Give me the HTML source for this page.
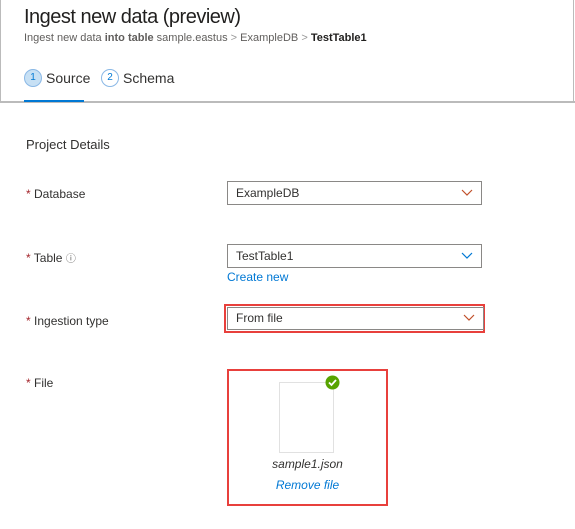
<!DOCTYPE html><html><head><style>
body{margin:0;width:575px;height:529px;background:#fff;font-family:"Liberation Sans",sans-serif;position:relative;overflow:hidden;color:#323130}
.a{position:absolute}
.lbl{font-size:12px;color:#323130}
.lbl b{color:#a4262c;font-weight:normal}
.dd{position:absolute;left:227px;width:245px;height:22px;border:1px solid #8a8886;font-size:12px;line-height:22px;padding-left:8px;box-sizing:content-box}
.dd svg{position:absolute;right:8px;top:7px}
</style></head><body>
<div class="a" style="left:0;top:0;width:1px;height:102px;background:#bbb"></div>
<div class="a" style="left:573px;top:0;width:1px;height:102px;background:#bbb"></div>
<div class="a" style="left:0;top:101px;width:575px;height:2px;background:#bbb"></div>
<div class="a" style="left:24px;top:6px;font-size:20px;color:#201f1e;letter-spacing:-0.5px">Ingest new data (preview)</div>
<div class="a" style="left:24px;top:32px;font-size:11px;color:#605e5c">Ingest new data <b style="font-weight:600">into table</b> sample.eastus <span style="color:#999">&gt;</span> ExampleDB <span style="color:#999">&gt;</span> <span style="color:#201f1e;font-weight:600">TestTable1</span></div>
<div class="a" style="left:24px;top:69px;width:16px;height:16px;border-radius:50%;background:#c7e0f4;border:1px solid #8ab8e6;font-size:10px;text-align:center;line-height:16px;color:#0078d4">1</div>
<div class="a" style="left:46px;top:70px;font-size:14px">Source</div>
<div class="a" style="left:24px;top:100px;width:60px;height:2px;background:#0078d4"></div>
<div class="a" style="left:101px;top:69px;width:16px;height:16px;border-radius:50%;border:1px solid #8ab8e6;font-size:10px;text-align:center;line-height:16px;color:#0078d4">2</div>
<div class="a" style="left:123px;top:70px;font-size:14px">Schema</div>
<div class="a" style="left:26px;top:137px;font-size:13px">Project Details</div>
<div class="a lbl" style="left:26px;top:187px"><b>*</b> Database</div>
<div class="dd" style="top:181px">ExampleDB<svg width="12" height="8"><path d="M1 1l5 5 5-5" fill="none" stroke="#c0502a" stroke-width="1.2"/></svg></div>
<div class="a lbl" style="left:26px;top:250px"><b>*</b> Table <span style="font-size:10px;color:#605e5c">ⓘ</span></div>
<div class="dd" style="top:244px">TestTable1<svg width="12" height="8"><path d="M1 1l5 5 5-5" fill="none" stroke="#0078d4" stroke-width="1.2"/></svg></div>
<div class="a" style="left:227px;top:270px;font-size:12px;color:#0078d4">Create new</div>
<div class="a lbl" style="left:26px;top:314px"><b>*</b> Ingestion type</div>
<div class="a" style="left:224px;top:304px;width:257px;height:25px;border:2px solid #e8403c"></div>
<div class="dd" style="top:307px;left:227px;width:247px;height:21px;line-height:21px;border-color:#8a8886">From file<svg width="12" height="8" style="top:6px"><path d="M1 1l5 5 5-5" fill="none" stroke="#c0502a" stroke-width="1.2"/></svg></div>
<div class="a lbl" style="left:26px;top:376px"><b>*</b> File</div>
<div class="a" style="left:227px;top:369px;width:157px;height:133px;border:2px solid #e8403c"></div>
<div class="a" style="left:279px;top:382px;width:53px;height:69px;border:1px solid #e1e1e1"></div>
<svg class="a" style="left:325px;top:375px" width="15" height="15"><circle cx="7.5" cy="7.5" r="7" fill="#57a300"/><path d="M4 7.5l2.5 2.5 4.5-5" fill="none" stroke="#fff" stroke-width="1.8"/></svg>
<div class="a" style="left:227px;width:161px;top:457px;text-align:center;font-size:12px;font-style:italic">sample1.json</div>
<div class="a" style="left:227px;width:161px;top:478px;text-align:center;font-size:12px;font-style:italic;color:#0078d4">Remove file</div>
</body></html>
